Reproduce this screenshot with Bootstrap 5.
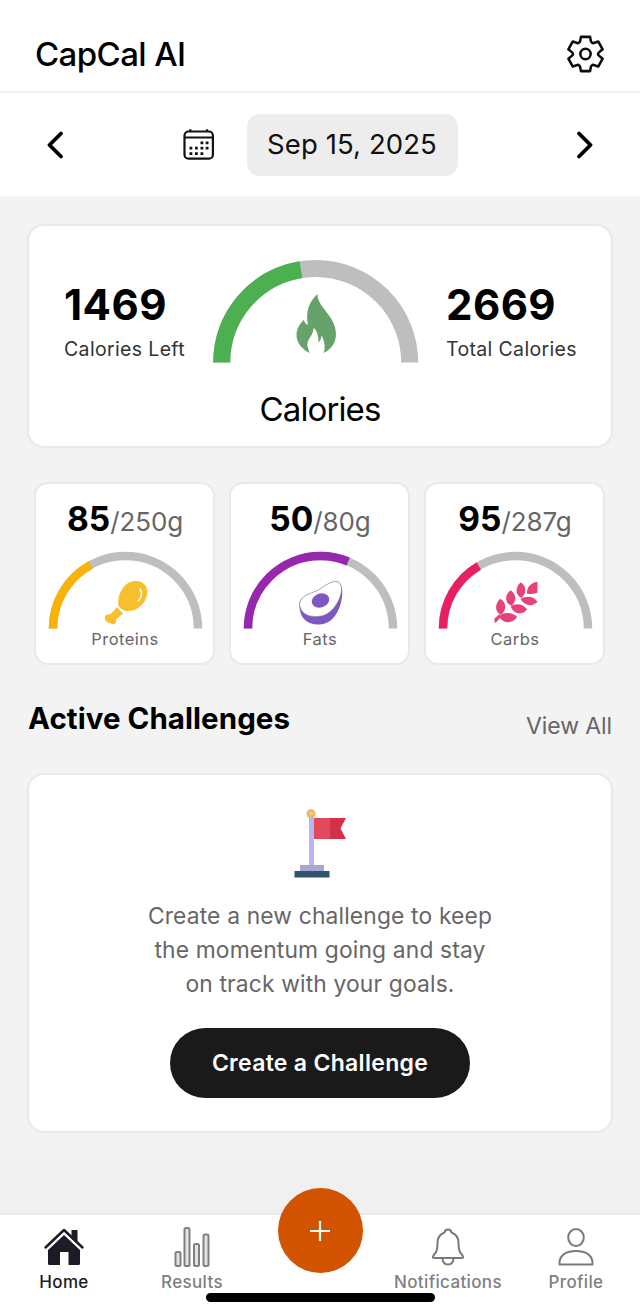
<!DOCTYPE html>
<html lang="en">
<head>
<meta charset="utf-8">
<meta name="viewport" content="width=device-width, initial-scale=1">
<title>CapCal AI</title>
<link href="https://cdn.jsdelivr.net/npm/bootstrap@5.3.0/dist/css/bootstrap.min.css" rel="stylesheet">
<style>
  body { font-family: Inter, "Liberation Sans", sans-serif; background: #f3f3f3; color: #000; height: 1316px; overflow: hidden; }
  svg { display: block; flex: none; }
  .app-header { height: 93px; padding: 16px 36px 0 35px; border-bottom: 2px solid #f0f0f0; }
  .app-title { font-size: 33px; font-weight: 500; letter-spacing: -.6px; line-height: 40px; }
  .date-bar { height: 103px; padding: 0 46px; }
  .date-group { margin-left: -8px; }
  .date-pill { width: 211px; height: 62px; border-radius: 13px; background: #ededed; font-size: 27.5px; letter-spacing: .1px; color: #111; }
  .panel { background: #fff; border: 2px solid #e9e9e9; border-radius: 17px; }
  .cal-panel { height: 224px; margin: 28px 27px 0; padding: 34px 0 0 34px; }
  .cal-grid { display: grid; grid-template-columns: 149px 233px 1fr; }
  .stat { padding: 20px 0 0 1px; }
  .stat-num { font-size: 42px; font-weight: 700; line-height: 50px; letter-spacing: .45px; }
  .stat-label { font-size: 19.5px; letter-spacing: .35px; line-height: 24px; color: #333; margin-top: 7px; }
  .cal-title { font-size: 33px; line-height: 40px; margin: 26px 34px 0 0; letter-spacing: -.9px; }
  .macros { display: grid; grid-template-columns: repeat(3, 181px); gap: 14px; padding: 0 34px; margin-top: 34px; }
  .macro { height: 183px; border-radius: 14px; padding: 14px 0 0 1px; }
  .macro-value { line-height: 42px; margin-bottom: 5px; white-space: nowrap; }
  .macro-value b { font-size: 33.5px; font-weight: 700; }
  .macro-value span { font-size: 26px; color: #666; letter-spacing: -.1px; }
  .macro-label { font-size: 16.5px; letter-spacing: .45px; line-height: 20px; color: #666; }
  .sec-head { padding: 0 28px; margin-top: 35px; }
  .sec-title { font-size: 29.5px; font-weight: 700; line-height: 36px; letter-spacing: .05px; }
  .sec-link { font-size: 23px; line-height: 28px; margin-top: 12px; letter-spacing: -.1px; color: #666; text-decoration: none; }
  .challenge { height: 360px; margin: 33px 27px 28px; padding-top: 32px; }
  .challenge p { font-size: 22.8px; line-height: 34px; letter-spacing: .16px; margin: 20px 0 27px; color: #666; }
  .cta { width: 300px; height: 70px; background: #1a1a1a; color: #fff; font-size: 23px; font-weight: 600; letter-spacing: .3px; }
  .cta:hover { background: #333; color: #fff; }
  .tabs { height: 103px; border-top: 2px solid #e9e9e9; }
  .under { background: #f0f0f0; height: 52px; }
  .tab { width: 20%; color: #808080; font-size: 17px; font-weight: 500; letter-spacing: .35px; line-height: 20px; text-decoration: none; white-space: nowrap; }
  .tab svg { margin: 12px 0 5px; }
  .tab.current { color: #1c1c22; }
  .fab { width: 85px; height: 85px; background: #d35400; margin-top: -27px; }
  .tab .fab svg { margin: 0; }
  .home-bar { position: absolute; left: 206px; bottom: 14px; width: 229px; height: 9px; border-radius: 5px; background: #000; }
</style>
</head>
<body class="d-flex flex-column">
<header class="app-header bg-white d-flex align-items-center justify-content-between">
  <h1 class="app-title mb-0">CapCal AI</h1>
  <svg width="37" height="38" viewBox="-19 -19.500 38 39" fill="none" stroke="#0a0a0a" stroke-width="2.600" stroke-linejoin="round"><path d="M-4.7-17.6H4.7L5.5-13.2Q5.8-12.2 6.7-11.7Q7.2-10.9 8.4-11.3L13.06-12.9L17.6-4.83L14.1-1.9Q12.8-.8 12.8 0Q12.8.8 14.1 1.9L17.6 4.83L13.06 12.9L8.4 11.3Q7.2 10.9 6.7 11.7Q5.8 12.2 5.5 13.2L4.7 17.6H-4.7L-5.5 13.2Q-5.8 12.2-6.7 11.7Q-7.2 10.9-8.4 11.3L-13.06 12.9L-17.6 4.83L-14.1 1.9Q-12.8.8-12.8 0Q-12.8-.8-14.1-1.9L-17.6-4.83L-13.06-12.9L-8.4-11.3Q-7.2-10.9-6.7-11.7Q-5.8-12.2-5.5-13.2Z"/><circle r="5.300"/></svg>
</header>
<div class="date-bar bg-white d-flex align-items-center justify-content-between">
  <svg width="18" height="28" viewBox="0 0 18 28" fill="none" stroke="#000" stroke-width="3.8" stroke-linecap="round" stroke-linejoin="round"><path d="M15 2.5L3.500 14L15 25.5"/></svg>
  <div class="date-group d-flex align-items-center">
    <svg class="me-4" width="48" height="32" viewBox="-8 0 48 32" fill="none" stroke="#111" stroke-width="2.200"><rect x="1.5" y="2.5" width="28.4" height="27.2" rx="4"/><path d="M1.5 8.500H29.9M7.300 2.500V.3M24 2.500V.3"/><g fill="#111" stroke="none"><path d="M17.5 12.4h2.8v2.8h-2.8zM22.7 12.4h2.8v2.8h-2.8zM6.5 17.7h2.8v2.8H6.5zM12 17.7h2.8v2.8H12zM17.5 17.7h2.8v2.8h-2.8zM22.7 17.7h2.8v2.8h-2.8zM6.5 23.2h2.8v2.8H6.5zM12 23.2h2.8v2.8H12zM17.5 23.2h2.8v2.8h-2.8z"/></g></svg>
    <div class="date-pill d-flex align-items-center justify-content-center">Sep 15, 2025</div>
  </div>
  <svg width="18" height="28" viewBox="0 0 18 28" fill="none" stroke="#000" stroke-width="3.8" stroke-linecap="round" stroke-linejoin="round"><path d="M3 2.5L14.500 14L3 25.5"/></svg>
</div>

<main class="flex-grow-1">
  <section class="panel cal-panel">
    <div class="cal-grid">
      <div class="stat"><div class="stat-num">1469</div><div class="stat-label">Calories Left</div></div>
      <svg width="207" height="103" viewBox="0 0 207 103" fill="none" stroke-width="17"><path d="M9.7 102.5A94 94 0 0 1 197.7 102.5" stroke="#bebebe"/><path d="M9.7 102.5A94 94 0 0 1 197.7 102.5" stroke="#4caf50" pathLength="100" stroke-dasharray="44.96 100"/>
        <path fill="#66a36b" d="M105.5 34C105 47 124 56 124 74C124 84 118 90 111.500 93C114 87 112 80 109.500 75.500C109 80 107.500 82 106.500 82C106.500 76 105 70 101.500 68C101 77 94.500 79 95.500 86Q96 89 97.500 93C91 90 84.500 83 84.500 75.500C84.500 68 88 64 92 59.500C92 62 93.500 64 96 65C93 50 98 41 105.500 34Z"/></svg>
      <div class="stat"><div class="stat-num">2669</div><div class="stat-label">Total Calories</div></div>
    </div>
    <div class="cal-title text-center">Calories</div>
  </section>

  <section class="macros text-center">
    <div class="panel macro">
      <div class="macro-value"><b>85</b><span>/250g</span></div>
      <svg class="mx-auto" width="155" height="78" viewBox="-77.500 -77.500 155 78" fill="none" stroke-width="8.500"><path d="M-72.500 0A72.500 72.500 0 0 1 72.500 0" stroke="#bebebe"/><path d="M-72.500 0A72.500 72.500 0 0 1 72.500 0" stroke="#f9b208" pathLength="100" stroke-dasharray="34 100"/>
        <g fill="#f6c02c" stroke="none"><path d="M-7-22.500C-9-34-1-47 9-47.500C19-48 24-41 21-31.500C18-22 9-16.500 0-17.500Q-4-18.500-7-22.500Z"/><path d="M-8.500-21.500L-2-15.500L-9.500-9C-8.500-4-13-3-15-5.500C-20-5-23-12-18.500-14Q-16-14.500-14.500-14.500Z"/></g><path d="M-9.200-22L-2-15.300" stroke="#fff" stroke-width="1"/><path d="M14.500-39.500Q18.500-33 12.500-27.500" stroke="#fff" stroke-width="1.500" stroke-linecap="round"/></svg>
      <div class="macro-label">Proteins</div>
    </div>
    <div class="panel macro">
      <div class="macro-value"><b>50</b><span>/80g</span></div>
      <svg class="mx-auto" width="155" height="78" viewBox="-77.500 -77.500 155 78" fill="none" stroke-width="8.500"><path d="M-72.500 0A72.500 72.500 0 0 1 72.500 0" stroke="#bebebe"/><path d="M-72.500 0A72.500 72.500 0 0 1 72.500 0" stroke="#9727af" pathLength="100" stroke-dasharray="62.500 100"/>
        <path fill="#7e57c2" d="M-21-26C-19-33-10-35-3-38C4-42 10-48 17-47C23-45 22.500-34 20.500-26C17-12 9-4-2-4C-15-4-22-12-21-26Z"/><path fill="#fff" stroke="#888" stroke-width=".6" d="M-20.800-25C-20-33-10-35-3-38C4-42 10-48 16.500-47C23-45 21.500-35 18-28C12-16 4-11.500-6-12C-15-12.500-21-17-20.800-25Z"/><ellipse cx="0" cy="-28" rx="9" ry="7" transform="rotate(-20 0 -28)" fill="#7e57c2"/></svg>
      <div class="macro-label">Fats</div>
    </div>
    <div class="panel macro">
      <div class="macro-value"><b>95</b><span>/287g</span></div>
      <svg class="mx-auto" width="155" height="78" viewBox="-77.500 -77.500 155 78" fill="none" stroke-width="8.500"><path d="M-72.500 0A72.500 72.500 0 0 1 72.500 0" stroke="#bebebe"/><path d="M-72.500 0A72.500 72.500 0 0 1 72.500 0" stroke="#e91e63" pathLength="100" stroke-dasharray="33.100 100"/>
        <g fill="#e8427c" stroke="none"><path d="M22-46.700V-36Q20-34.300 11.500-34.700C11-41 15-45.500 22-46.700Z"/><path d="M5.500-46.300C12-41 10.500-35 6-30.500C-1.500-34 .5-43 5.500-46.300Z"/><path d="M-4.800-38.300C2-33 .5-27-4-22.700C-12-26-10-35-4.800-38.300Z"/><path d="M-15-29.800C-8-25-9.500-18-14.500-13.500C-22-18-20-26-15-29.800Z"/><path d="M5-29.500C11-33.500 19-32 22-26.500C17-21.500 9-22.500 5-29.500Z"/><path d="M-4.800-22C0-26 8-24.500 11.500-19C7-13 -1.500-14-4.800-22Z"/><path d="M-15.500-13C-11-17 -2-16 1.700-11.500C-3-4.500-12-5-15.500-10.500L-19-6.500L-21-5.500V-10L-16-14.500Z"/></g></svg>
      <div class="macro-label">Carbs</div>
    </div>
  </section>

  <div class="sec-head d-flex justify-content-between align-items-start">
    <h2 class="sec-title mb-0">Active Challenges</h2>
    <a href="#" class="sec-link">View All</a>
  </div>

  <section class="panel challenge d-flex flex-column align-items-center text-center">
    <svg width="56" height="72" viewBox="0 0 56 72"><path fill="#b9b5f5" d="M17 10h5v48h-5z"/><circle cx="19" cy="6.700" r="4.500" fill="#eab765"/><circle cx="19.500" cy="6.500" r="2" fill="#f2ca83"/><path fill="#e2495d" d="M22 11h16v21H22z"/><path fill="#d3304a" d="M38 11h16L48.500 21.500L54 32H38z"/><path fill="#aaa7ce" d="M8 58h24v6.500H8z"/><path fill="#2f5572" d="M2.500 64h35v6.500h-35z"/></svg>
    <p>Create a new challenge to keep<br>the momentum going and stay<br>on track with your goals.</p>
    <button class="btn cta rounded-pill p-0">Create a Challenge</button>
  </section>
</main>

<div class="under"></div>
<nav class="tabs bg-white d-flex position-relative">
  <a href="#" class="tab current d-flex flex-column align-items-center">
    <svg width="42" height="40" viewBox="0 0 42 40" fill="#1c1c26"><path d="M21 8L5 23V36.500Q5 38 6.500 38H17V25h8.500V38H35.500Q37 38 37 36.500V23Z"/><path d="M2.500 22L21 4.500L39.500 22" fill="none" stroke="#fff" stroke-width="4"/><path d="M28.500 3h6v14L28.500 11.500z"/><path d="M2.500 20.500L21 3L39.500 20.500" fill="none" stroke="#1c1c26" stroke-width="2.500" stroke-linecap="round" stroke-linejoin="round"/></svg>
    <span>Home</span></a>
  <a href="#" class="tab d-flex flex-column align-items-center">
    <svg width="36" height="40" viewBox="0 0 36 40" fill="#e4e4e4" stroke="#808080" stroke-width="2"><rect x="1.500" y="25" width="5" height="14" rx="1.500"/><rect x="10.500" y="1" width="5" height="38" rx="1.500"/><rect x="20" y="17" width="5" height="22" rx="1.500"/><rect x="29.500" y="7.500" width="5" height="31.500" rx="1.500"/></svg>
    <span>Results</span></a>
  <div class="tab d-flex justify-content-center"><button class="btn fab rounded-circle p-0 d-flex align-items-center justify-content-center" aria-label="Add"><svg width="20" height="20" viewBox="0 0 20 20" stroke="#fff" stroke-width="2.200"><path d="M10 0V20M0 10H20"/></svg></button></div>
  <a href="#" class="tab d-flex flex-column align-items-center">
    <svg width="34" height="40" viewBox="0 0 34 40" fill="none" stroke="#7a7a7a" stroke-width="2" stroke-linejoin="round"><path d="M13.500 5.500Q14 2.500 17 2.500T20.500 5.500C26 7.500 27.500 11 27.500 16C27.500 23 28.500 25 31.500 28.500Q33 31 31 31H3Q1 31 2.500 28.500C5.500 25 6.500 23 6.500 16C6.500 11 8 7.500 13.500 5.500Z"/><path d="M11.500 31.500Q12 37.500 17 37.500T22.500 31.500"/></svg>
    <span>Notifications</span></a>
  <a href="#" class="tab d-flex flex-column align-items-center">
    <svg width="36" height="40" viewBox="0 0 36 40" fill="none" stroke="#7a7a7a" stroke-width="2" stroke-linejoin="round"><ellipse cx="18" cy="10.500" rx="7.800" ry="8.500"/><path d="M1.500 37.500V35Q3 24 18 24T34.500 35V37.500Z"/></svg>
    <span>Profile</span></a>
  <div class="home-bar"></div>
</nav>
<script src="https://cdn.jsdelivr.net/npm/bootstrap@5.3.0/dist/js/bootstrap.bundle.min.js"></script>
</body>
</html>
